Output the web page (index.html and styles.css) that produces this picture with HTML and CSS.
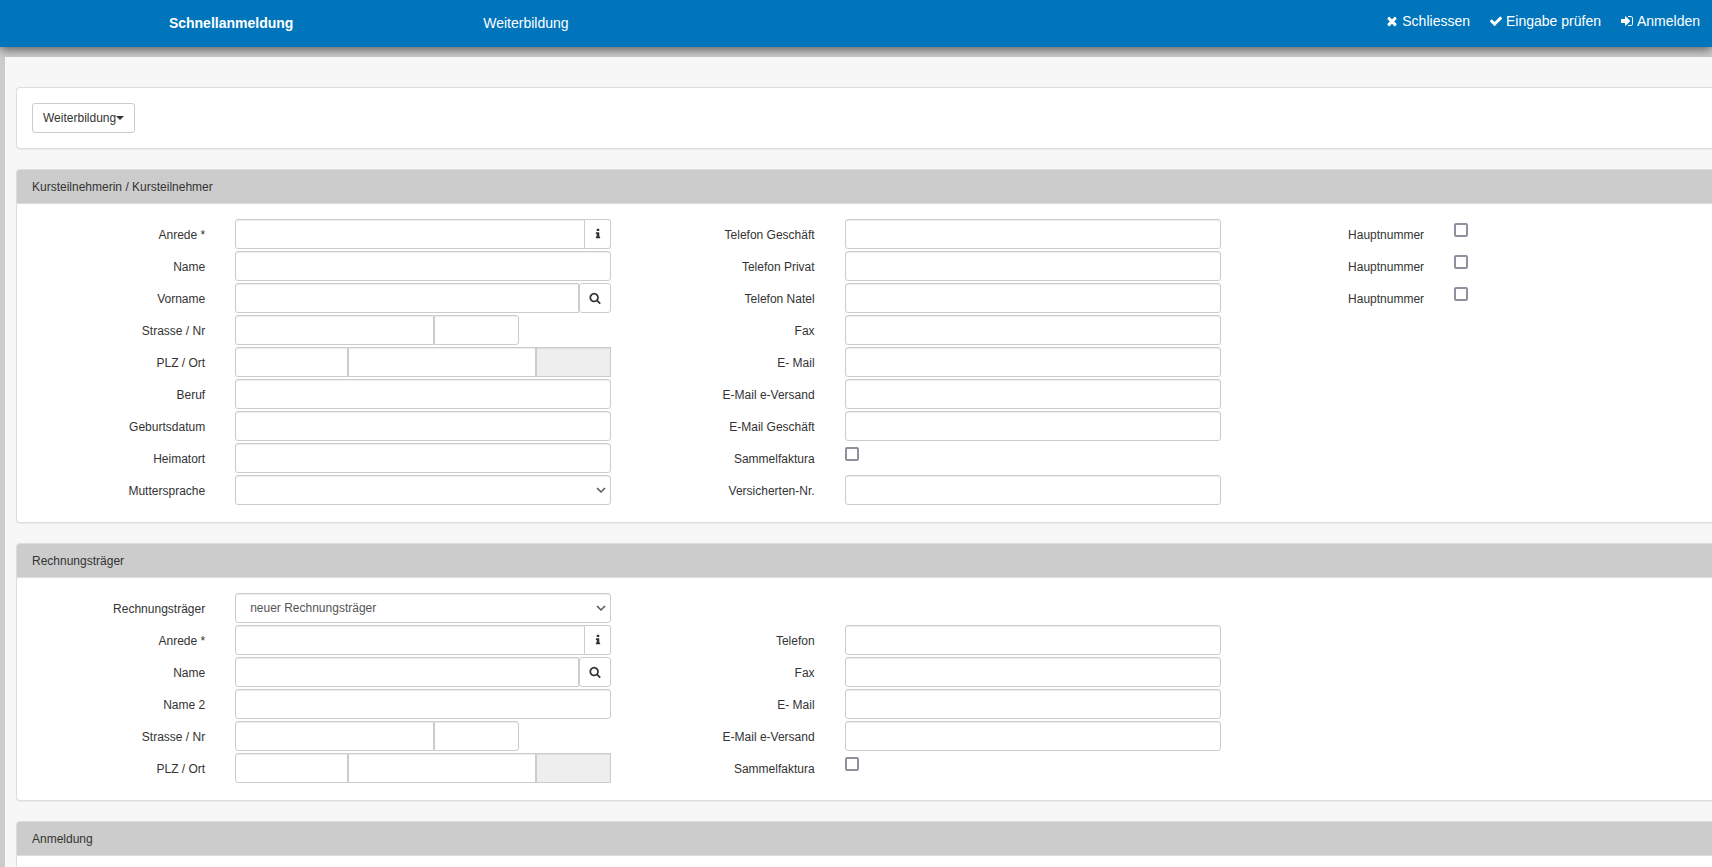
FILE: index.html
```html
<!DOCTYPE html>
<html lang="de">
<head>
<meta charset="utf-8">
<title>Schnellanmeldung</title>
<link rel="stylesheet" href="styles.css">
</head>
<body>
<svg class="sprite" aria-hidden="true">
  <symbol id="times" viewBox="0 0 1792 1792"><path d="M1490 1322q0 40-28 68l-136 136q-28 28-68 28t-68-28l-294-294-294 294q-28 28-68 28t-68-28l-136-136q-28-28-28-68t28-68l294-294-294-294q-28-28-28-68t28-68l136-136q28-28 68-28t68 28l294 294 294-294q28-28 68-28t68 28l136 136q28 28 28 68t-28 68l-294 294 294 294q28 28 28 68z"/></symbol>
  <symbol id="check" viewBox="0 0 1792 1792"><path d="M1671 566q0 40-28 68l-724 724-136 136q-28 28-68 28t-68-28l-136-136-362-362q-28-28-28-68t28-68l136-136q28-28 68-28t68 28l294 295 656-657q28-28 68-28t68 28l136 136q28 28 28 68z"/></symbol>
  <symbol id="sign-in" viewBox="0 0 1792 1792"><path d="M1312 896q0 26-19 45l-544 544q-19 19-45 19t-45-19-19-45v-288h-448q-26 0-45-19t-19-45v-384q0-26 19-45t45-19h448v-288q0-26 19-45t45-19 45 19l544 544q19 19 19 45zm352-352v704q0 119-84.500 203.500t-203.500 84.500h-320q-13 0-22.500-9.500t-9.500-22.500q0-4-1-20t-.5-26.500 3-23.500 10-19.500 20.500-6.500h320q66 0 113-47t47-113v-704q0-66-47-113t-113-47h-312l-11.500-1-11.500-3-8-5.500-7-9-2-13.500q0-4-1-20t-.5-26.500 3-23.500 10-19.500 20.500-6.500h320q119 0 203.500 84.500t84.500 203.500z"/></symbol>
  <symbol id="search" viewBox="0 0 1792 1792"><path d="M1216 832q0-185-131.500-316.500t-316.500-131.500-316.500 131.500-131.500 316.500 131.500 316.500 316.500 131.500 316.500-131.500 131.500-316.500zm512 832q0 52-38 90t-90 38q-54 0-90-38l-343-342q-179 124-399 124-143 0-273.500-55.500t-225-150-150-225-55.500-273.500 55.500-273.500 150-225 225-150 273.500-55.500 273.500 55.500 225 150 150 225 55.500 273.500q0 220-124 399l343 343q37 37 37 90z"/></symbol>
  <symbol id="info" viewBox="0 0 1792 1792"><path d="M1216 1344v128q0 26-19 45t-45 19h-512q-26 0-45-19t-19-45v-128q0-26 19-45t45-19h64v-384h-64q-26 0-45-19t-19-45v-128q0-26 19-45t45-19h384q26 0 45 19t19 45v576h64q26 0 45 19t19 45zm-128-1152v192q0 26-19 45t-45 19h-256q-26 0-45-19t-19-45v-192q0-26 19-45t45-19h256q26 0 45 19t19 45z"/></symbol>
</svg>

<header class="topbar">
  <h1 class="topbar-title">Schnellanmeldung</h1>
  <div class="topbar-subtitle">Weiterbildung</div>
  <nav class="topbar-actions">
    <a href="#close"><svg class="icon"><use href="#times"/></svg>Schliessen</a>
    <a href="#pruefen"><svg class="icon"><use href="#check"/></svg>Eingabe prüfen</a>
    <a href="#anmelden"><svg class="icon"><use href="#sign-in"/></svg>Anmelden</a>
  </nav>
</header>

<main class="page">
  <section class="panel">
    <div class="panel-body">
      <button type="button" class="btn">Weiterbildung<span class="caret"></span></button>
    </div>
  </section>

  <section class="panel">
    <h2 class="panel-heading">Kursteilnehmerin / Kursteilnehmer</h2>
    <form class="panel-body form">
      <div class="row">
        <label for="k-anrede">Anrede *</label>
        <div class="field group"><input class="control" id="k-anrede"><button type="button" class="addon" aria-label="Info"><svg class="icon-small"><use href="#info"/></svg></button></div>
        <label for="k-telg">Telefon Geschäft</label>
        <div class="field"><input class="control" id="k-telg"></div>
        <label for="k-h1">Hauptnummer</label>
        <div class="field"><input type="checkbox" class="tick" id="k-h1"></div>
      </div>
      <div class="row">
        <label for="k-name">Name</label>
        <div class="field"><input class="control" id="k-name"></div>
        <label for="k-telp">Telefon Privat</label>
        <div class="field"><input class="control" id="k-telp"></div>
        <label for="k-h2">Hauptnummer</label>
        <div class="field"><input type="checkbox" class="tick" id="k-h2"></div>
      </div>
      <div class="row">
        <label for="k-vorname">Vorname</label>
        <div class="field group"><input class="control" id="k-vorname"><button type="button" class="search" aria-label="Suchen"><svg class="icon-small"><use href="#search"/></svg></button></div>
        <label for="k-teln">Telefon Natel</label>
        <div class="field"><input class="control" id="k-teln"></div>
        <label for="k-h3">Hauptnummer</label>
        <div class="field"><input type="checkbox" class="tick" id="k-h3"></div>
      </div>
      <div class="row">
        <label for="k-strasse">Strasse / Nr</label>
        <div class="field street"><input class="control" id="k-strasse"><input class="control" aria-label="Nr"></div>
        <label for="k-fax">Fax</label>
        <div class="field"><input class="control" id="k-fax"></div>
      </div>
      <div class="row">
        <label for="k-plz">PLZ / Ort</label>
        <div class="field city"><input class="control" id="k-plz"><input class="control" aria-label="Ort"><input class="control" aria-label="Kanton" disabled></div>
        <label for="k-mail">E- Mail</label>
        <div class="field"><input class="control" id="k-mail"></div>
      </div>
      <div class="row">
        <label for="k-beruf">Beruf</label>
        <div class="field"><input class="control" id="k-beruf"></div>
        <label for="k-maile">E-Mail e-Versand</label>
        <div class="field"><input class="control" id="k-maile"></div>
      </div>
      <div class="row">
        <label for="k-geb">Geburtsdatum</label>
        <div class="field"><input class="control" id="k-geb"></div>
        <label for="k-mailg">E-Mail Geschäft</label>
        <div class="field"><input class="control" id="k-mailg"></div>
      </div>
      <div class="row">
        <label for="k-heimat">Heimatort</label>
        <div class="field"><input class="control" id="k-heimat"></div>
        <label for="k-sammel">Sammelfaktura</label>
        <div class="field"><input type="checkbox" class="tick" id="k-sammel"></div>
      </div>
      <div class="row">
        <label for="k-sprache">Muttersprache</label>
        <div class="field"><select class="control" id="k-sprache"><option></option></select></div>
        <label for="k-vers">Versicherten-Nr.</label>
        <div class="field"><input class="control" id="k-vers"></div>
      </div>
    </form>
  </section>

  <section class="panel">
    <h2 class="panel-heading">Rechnungsträger</h2>
    <form class="panel-body form">
      <div class="row">
        <label for="r-traeger">Rechnungsträger</label>
        <div class="field"><select class="control" id="r-traeger"><option>neuer Rechnungsträger</option></select></div>
      </div>
      <div class="row">
        <label for="r-anrede">Anrede *</label>
        <div class="field group"><input class="control" id="r-anrede"><button type="button" class="addon" aria-label="Info"><svg class="icon-small"><use href="#info"/></svg></button></div>
        <label for="r-tel">Telefon</label>
        <div class="field"><input class="control" id="r-tel"></div>
      </div>
      <div class="row">
        <label for="r-name">Name</label>
        <div class="field group"><input class="control" id="r-name"><button type="button" class="search" aria-label="Suchen"><svg class="icon-small"><use href="#search"/></svg></button></div>
        <label for="r-fax">Fax</label>
        <div class="field"><input class="control" id="r-fax"></div>
      </div>
      <div class="row">
        <label for="r-name2">Name 2</label>
        <div class="field"><input class="control" id="r-name2"></div>
        <label for="r-mail">E- Mail</label>
        <div class="field"><input class="control" id="r-mail"></div>
      </div>
      <div class="row">
        <label for="r-strasse">Strasse / Nr</label>
        <div class="field street"><input class="control" id="r-strasse"><input class="control" aria-label="Nr"></div>
        <label for="r-maile">E-Mail e-Versand</label>
        <div class="field"><input class="control" id="r-maile"></div>
      </div>
      <div class="row">
        <label for="r-plz">PLZ / Ort</label>
        <div class="field city"><input class="control" id="r-plz"><input class="control" aria-label="Ort"><input class="control" aria-label="Kanton" disabled></div>
        <label for="r-sammel">Sammelfaktura</label>
        <div class="field"><input type="checkbox" class="tick" id="r-sammel"></div>
      </div>
    </form>
  </section>

  <section class="panel">
    <h2 class="panel-heading">Anmeldung</h2>
    <div class="panel-body"></div>
  </section>
</main>
</body>
</html>
```
FILE: styles.css
```css
* {
  box-sizing: border-box;
}

html {
  height: 100%;
  overflow: hidden;
}

body {
  display: flex;
  flex-direction: column;
  height: 100%;
  margin: 0;
  overflow: hidden;
  background: #ccc;
  color: #333;
  font: 12px/17px "Liberation Sans", Arial, sans-serif;
}

.sprite {
  display: none;
}

.icon {
  width: 14px;
  height: 14px;
  fill: currentColor;
}

.icon-small {
  width: 12px;
  height: 12px;
  fill: currentColor;
}

/* Top bar */
.topbar {
  display: flex;
  flex: none;
  height: 47px;
  background: #0075bc;
  box-shadow: 0 2px 10px rgba(0, 0, 0, 0.6);
  color: #fff;
  font-size: 14px;
  line-height: 20px;
}

.topbar-title {
  width: 27%;
  margin: 0;
  padding-top: 13px;
  font-size: 14px;
  text-align: center;
}

.topbar-subtitle {
  padding: 13px 21px;
}

.topbar-actions {
  display: flex;
  gap: 19px;
  align-items: flex-start;
  margin-left: auto;
  padding: 11px 12px;
}

.topbar-actions a {
  display: flex;
  gap: 3px;
  align-items: center;
  color: inherit;
  text-decoration: none;
}

/* Content area */
.page {
  position: relative;
  flex: 1;
  min-height: 0;
  margin: 10px 0 0 5px;
  padding: 30px 0 0 11px;
  overflow: hidden;
  background: #f7f7f7;
}

.panel {
  margin-bottom: 20px;
  border: 1px solid #ddd;
  border-right: 0;
  border-radius: 4px 0 0 4px;
  background: #fff;
  box-shadow: 0 1px 1px rgba(0, 0, 0, 0.05);
}

.panel-heading {
  margin: 0;
  padding: 9px 15px 7px;
  border-bottom: 1px solid #ddd;
  border-radius: 3px 0 0 0;
  background: #ccc;
  font-size: 12px;
  font-weight: normal;
}

.panel-body {
  padding: 15px;
}

.btn {
  display: flex;
  align-items: center;
  height: 30px;
  padding: 0 10px;
  border: 1px solid #ccc;
  border-radius: 3px;
  background: #fff;
  color: #333;
  font: inherit;
}

.caret {
  border-top: 4px solid;
  border-right: 4px solid transparent;
  border-left: 4px solid transparent;
}

/* Form rows */
.form {
  padding: 15px 2px 15px 0;
}

.row {
  display: grid;
  grid-template-columns: 12% 24% 12% 24% 12% 16%;
  height: 32px;
}

.row label {
  padding: 8px 15px 0;
  text-align: right;
}

.field {
  padding: 0 15px;
}

.control {
  display: block;
  width: 100%;
  min-width: 0;
  height: 30px;
  margin: 0;
  padding: 4px 14px;
  border: 1px solid #ccc;
  border-radius: 3px;
  background: #fff;
  box-shadow: inset 0 1px 1px rgba(0, 0, 0, 0.075);
  color: #555;
  font: inherit;
}

select.control {
  appearance: none;
  background: #fff url("data:image/svg+xml,%3Csvg xmlns='http://www.w3.org/2000/svg' width='10' height='10'%3E%3Cpath d='M1 3l4 4 4-4' fill='none' stroke='%23555' stroke-width='1.500'/%3E%3C/svg%3E") no-repeat right 4px center;
}

.control:disabled {
  background: #eee;
}

.group {
  display: flex;
}

.group .control {
  flex: 1;
  border-radius: 3px 0 0 3px;
}

.addon,
.search {
  display: flex;
  flex: none;
  align-items: center;
  justify-content: center;
  height: 30px;
  padding: 0;
  border: 1px solid #ccc;
  background: #fff;
  color: #333;
}

.addon {
  width: 26px;
  border-left: 0;
  border-radius: 0 3px 3px 0;
}

.search {
  width: 32px;
  border-radius: 3px;
}

.street {
  display: grid;
  grid-template-columns: 199fr 85fr 93fr;
}

.city {
  display: grid;
  grid-template-columns: 30% 50% 20%;
}

.street .control:first-child,
.city .control:first-child {
  border-radius: 3px 0 0 3px;
}

.street .control:last-child {
  border-radius: 0 3px 3px 0;
}

.city .control:not(:first-child) {
  border-radius: 0;
}

.tick {
  display: block;
  width: 14px;
  height: 14px;
  margin: 4px 0 0;
  appearance: none;
  border: 2px solid #8f8f9d;
  border-radius: 2px;
  background: #fff;
}

.tick:checked {
  background: #0075bc;
}
```
